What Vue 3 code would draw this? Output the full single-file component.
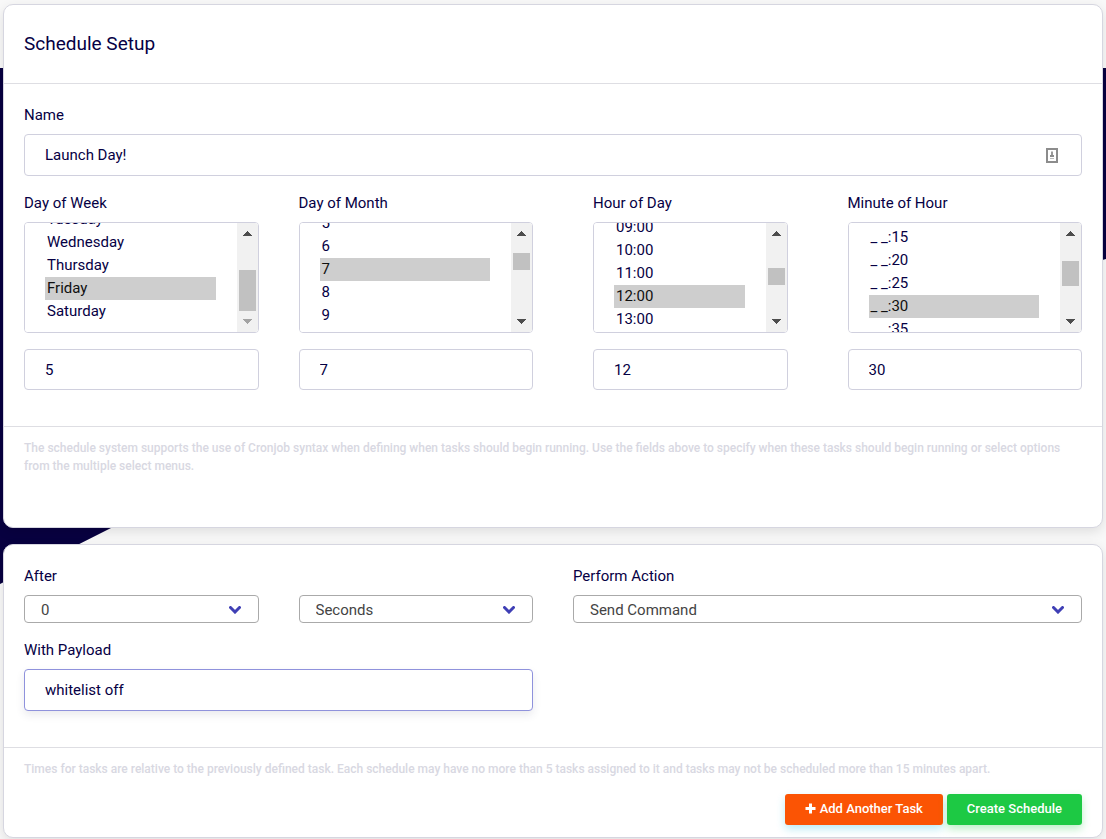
<script setup>
import { reactive, ref, onMounted } from 'vue'

const pad = (n) => String(n).padStart(2, '0')

const name = ref('Launch Day!')
const payload = ref('whitelist off')
const after = ref('0')
const unit = ref('Seconds')
const action = ref('Send Command')

const days = ['Sunday', 'Monday', 'Tuesday', 'Wednesday', 'Thursday', 'Friday', 'Saturday']

const fields = reactive([
  {
    id: 'dow',
    label: 'Day of Week',
    options: days.map((text, i) => ({ text, value: String(i) })),
    picked: ['5'],
    cron: '5',
    start: 70
  },
  {
    id: 'dom',
    label: 'Day of Month',
    options: Array.from({ length: 31 }, (_, i) => ({ text: String(i + 1), value: String(i + 1) })),
    picked: ['7'],
    cron: '7',
    start: 112
  },
  {
    id: 'hour',
    label: 'Hour of Day',
    options: Array.from({ length: 24 }, (_, i) => ({ text: `${pad(i)}:00`, value: String(i) })),
    picked: ['12'],
    cron: '12',
    start: 223
  },
  {
    id: 'minute',
    label: 'Minute of Hour',
    options: Array.from({ length: 12 }, (_, i) => ({ text: `_ _:${pad(i * 5)}`, value: String(i * 5) })),
    picked: ['30'],
    cron: '30',
    start: 75
  }
])

const lists = ref([])
const bars = reactive(fields.map(() => ({ top: 0, size: 17, atStart: false, atEnd: false })))

// Track length between the two arrow buttons of a list's scroll bar.
const TRACK = 67

function track(i) {
  const el = lists.value[i]
  if (!el) return
  const max = Math.max(1, el.scrollHeight - el.clientHeight)
  const size = Math.max(17, Math.round((TRACK * el.clientHeight) / el.scrollHeight))
  bars[i].size = size
  bars[i].top = Math.floor((el.scrollTop / max) * (TRACK - size))
  bars[i].atStart = el.scrollTop <= 0
  bars[i].atEnd = el.scrollTop >= max - 1
}

function place() {
  fields.forEach((f, i) => {
    if (lists.value[i]) lists.value[i].scrollTop = f.start
    track(i)
  })
}

onMounted(() => {
  place()
  requestAnimationFrame(place)
})

function sync(f) {
  f.cron = f.picked.join(',')
}
</script>

<template>
  <main class="page">
    <div class="backdrop" aria-hidden="true"></div>

    <section class="card">
      <header class="card-header">
        <h1>Schedule Setup</h1>
      </header>
      <div class="card-body">
        <div class="field">
          <label for="name">Name</label>
          <div class="with-icon">
            <input id="name" v-model="name" class="text-input" type="text" />
            <svg class="key-icon" viewBox="0 0 12 15" width="12" height="15" aria-hidden="true">
              <rect x="1" y="1" width="10" height="13" fill="#fff" stroke="#8c8c8c" stroke-width="2" />
              <path d="M6 3l1 1v3H5V4z" fill="#999" />
              <path d="M4 7h4v2H4z" fill="#8c8c8c" />
              <path d="M4 10h4v1H4z" fill="#bbb" />
            </svg>
          </div>
        </div>
        <div class="grid">
          <div v-for="(f, i) in fields" :key="f.id" class="field" :class="{ inset: f.id === 'hour' }">
            <label :for="f.id">{{ f.label }}</label>
            <div class="list">
              <select
                :id="f.id"
                :ref="(el) => (lists[i] = el)"
                v-model="f.picked"
                multiple
                @scroll="track(i)"
                @change="sync(f)"
              >
                <option v-for="o in f.options" :key="o.value" :value="o.value">{{ o.text }}</option>
              </select>
              <div class="bar" aria-hidden="true">
                <div class="arrow" :class="{ dim: bars[i].atStart }">
                  <svg viewBox="0 0 9 5" width="9" height="5"><path d="M4 0h1v1h1v1h1v1h1v1h1v1H0V4h1V3h1V2h1V1h1z" /></svg>
                </div>
                <div class="track">
                  <div class="thumb" :style="{ height: bars[i].size + 'px', marginTop: bars[i].top + 'px' }"></div>
                </div>
                <div class="arrow" :class="{ dim: bars[i].atEnd }">
                  <svg viewBox="0 0 9 5" width="9" height="5"><path d="M0 0h9v1H8v1H7v1H6v1H5v1H4V4H3V3H2V2H1V1H0z" /></svg>
                </div>
              </div>
            </div>
            <input v-model="f.cron" class="text-input cron" type="text" :aria-label="f.label + ' value'" />
          </div>
        </div>
      </div>
      <footer class="card-footer tall">
        <p>
          The schedule system supports the use of Cronjob syntax when defining when tasks should begin running. Use
          the fields above to specify when these tasks should begin running or select options from the multiple
          select menus.
        </p>
      </footer>
    </section>

    <section class="card">
      <div class="card-body">
        <div class="grid">
          <div class="field">
            <label for="after">After</label>
            <div class="drop">
              <select id="after" v-model="after">
                <option>0</option>
                <option>1</option>
                <option>5</option>
                <option>10</option>
              </select>
              <svg class="chevron" viewBox="0 0 12 8" width="12" height="8" aria-hidden="true"><path d="M1.500 1.500L6 6l4.500-4.500" /></svg>
            </div>
          </div>
          <div class="field bottom">
            <div class="drop">
              <select v-model="unit" aria-label="Time unit">
                <option>Seconds</option>
                <option>Minutes</option>
              </select>
              <svg class="chevron" viewBox="0 0 12 8" width="12" height="8" aria-hidden="true"><path d="M1.500 1.500L6 6l4.500-4.500" /></svg>
            </div>
          </div>
          <div class="field wide">
            <label for="action">Perform Action</label>
            <div class="drop">
              <select id="action" v-model="action">
                <option>Send Command</option>
                <option>Send Power Action</option>
              </select>
              <svg class="chevron" viewBox="0 0 12 8" width="12" height="8" aria-hidden="true"><path d="M1.500 1.500L6 6l4.500-4.500" /></svg>
            </div>
          </div>
          <div class="field wide">
            <label for="payload">With Payload</label>
            <input id="payload" v-model="payload" class="text-input active" type="text" />
          </div>
        </div>
      </div>
      <footer class="card-footer">
        <p>
          Times for tasks are relative to the previously defined task. Each schedule may have no more than 5 tasks
          assigned to it and tasks may not be scheduled more than 15 minutes apart.
        </p>
        <div class="actions">
          <button type="button" class="add">
            <svg viewBox="0 0 11 11" width="11" height="11" aria-hidden="true"><path d="M4 0.500h3V4h3.500v3H7v3.500H4V7H0.500V4H4z" fill="#fff" /></svg>
            Add Another Task
          </button>
          <button type="button" class="create">Create Schedule</button>
        </div>
      </footer>
    </section>
  </main>
</template>

<style>
body {
  background: #f8f8f8;
}
</style>

<style scoped>
.page,
.page * {
  box-sizing: border-box;
}

.page {
  position: relative;
  display: flex;
  flex-direction: column;
  gap: 16px;
  padding: 4px 3px 1px;
  font-family: Roboto, "Liberation Sans", sans-serif;
  font-size: 15px;
  color: #060044;
  background: #f8f8f8;
}

.backdrop {
  position: absolute;
  top: 68px;
  left: 0;
  right: 0;
  height: 516px;
  background: #080040;
  clip-path: polygon(0 0, 100% 0, 100% 191px, 111px 460px, 0 100%);
}

.card {
  position: relative;
  background: #fff;
  border: 1px solid #d6d6e0;
  border-radius: 10px;
  box-shadow: 0 4px 12px rgba(0, 0, 0, 0.1);
}

.card-header {
  padding: 28px 20px;
  border-bottom: 1px solid #dedee3;
}

h1 {
  margin: 0;
  font-size: 19px;
  line-height: 22px;
  font-weight: 400;
}

.card-body {
  display: flex;
  flex-direction: column;
  gap: 16px;
  padding: 20px 20px 36px;
}

.grid {
  display: grid;
  grid-template-columns: repeat(4, minmax(0, 1fr));
  gap: 16px 40px;
}

.field {
  display: flex;
  flex-direction: column;
  min-width: 0;
}

.inset {
  padding: 0 20px;
}

.wide {
  grid-column: span 2;
}

.bottom {
  justify-content: flex-end;
}

label {
  margin-bottom: 8px;
  line-height: 22px;
}

.text-input {
  width: 100%;
  height: 42px;
  padding: 0 20px;
  font: inherit;
  color: #060044;
  background: #fff;
  border: 1px solid #d0d0de;
  border-radius: 4px;
  outline: none;
}

.cron {
  margin-top: 16px;
  height: 41px;
}

.active {
  border-color: #8f92dc;
  box-shadow: 0 4px 9px rgba(50, 50, 93, 0.1);
}

.with-icon,
.list,
.drop {
  position: relative;
  display: flex;
}

.key-icon {
  position: absolute;
  right: 24px;
  top: 14px;
}

.list select {
  width: 100%;
  height: 111px;
  padding: 9px 42px 9px 20px;
  font: inherit;
  color: #060044;
  background: #fff;
  border: 1px solid #d0d0de;
  border-radius: 4px;
  outline: none;
  overflow-y: scroll;
  scrollbar-width: none;
}

.list option {
  height: 23px;
  padding: 2px 2px 0;
}

.bar {
  position: absolute;
  top: 1px;
  right: 1px;
  bottom: 1px;
  width: 21px;
  display: flex;
  flex-direction: column;
  background: #f1f1f1;
  border-radius: 0 3px 3px 0;
}

.arrow {
  height: 21px;
  display: flex;
  align-items: center;
  justify-content: center;
  fill: #4d4d4d;
}

.arrow.dim {
  fill: #a3a3a3;
}

.track {
  flex: 1;
  display: flex;
  justify-content: center;
  align-items: flex-start;
}

.thumb {
  width: 17px;
  background: #c1c1c1;
}

.drop select {
  width: 100%;
  height: 28px;
  padding: 2px 40px 0 16px;
  font: inherit;
  color: #444;
  background: #fff;
  border: 1px solid #aaa;
  border-radius: 4px;
  outline: none;
  appearance: none;
}

.chevron {
  position: absolute;
  right: 18px;
  top: 11px;
  pointer-events: none;
  fill: none;
  stroke: #3f3fb5;
  stroke-width: 3;
  stroke-linecap: round;
}

.card-footer {
  padding: 12px 20px;
  border-top: 1px solid #dedee3;
}

.tall {
  padding-bottom: 52px;
}

.card-footer p {
  margin: 0;
  font-size: 12px;
  font-weight: 500;
  line-height: 18px;
  color: #d8d8e2;
}

.actions {
  display: flex;
  justify-content: flex-end;
  gap: 4px;
  margin-top: 16px;
}

.actions button {
  display: flex;
  align-items: center;
  gap: 4px;
  height: 31px;
  padding: 0 20px 2px;
  font: inherit;
  font-size: 13px;
  font-weight: 500;
  color: #fff;
  border: 0;
  border-radius: 3px;
}

.actions .add {
  background: #fb5404;
  box-shadow: 0 4px 9px rgba(30, 190, 220, 0.3);
}

.actions .create {
  background: #1dc944;
  box-shadow: 0 4px 9px rgba(29, 201, 68, 0.3);
}
</style>
